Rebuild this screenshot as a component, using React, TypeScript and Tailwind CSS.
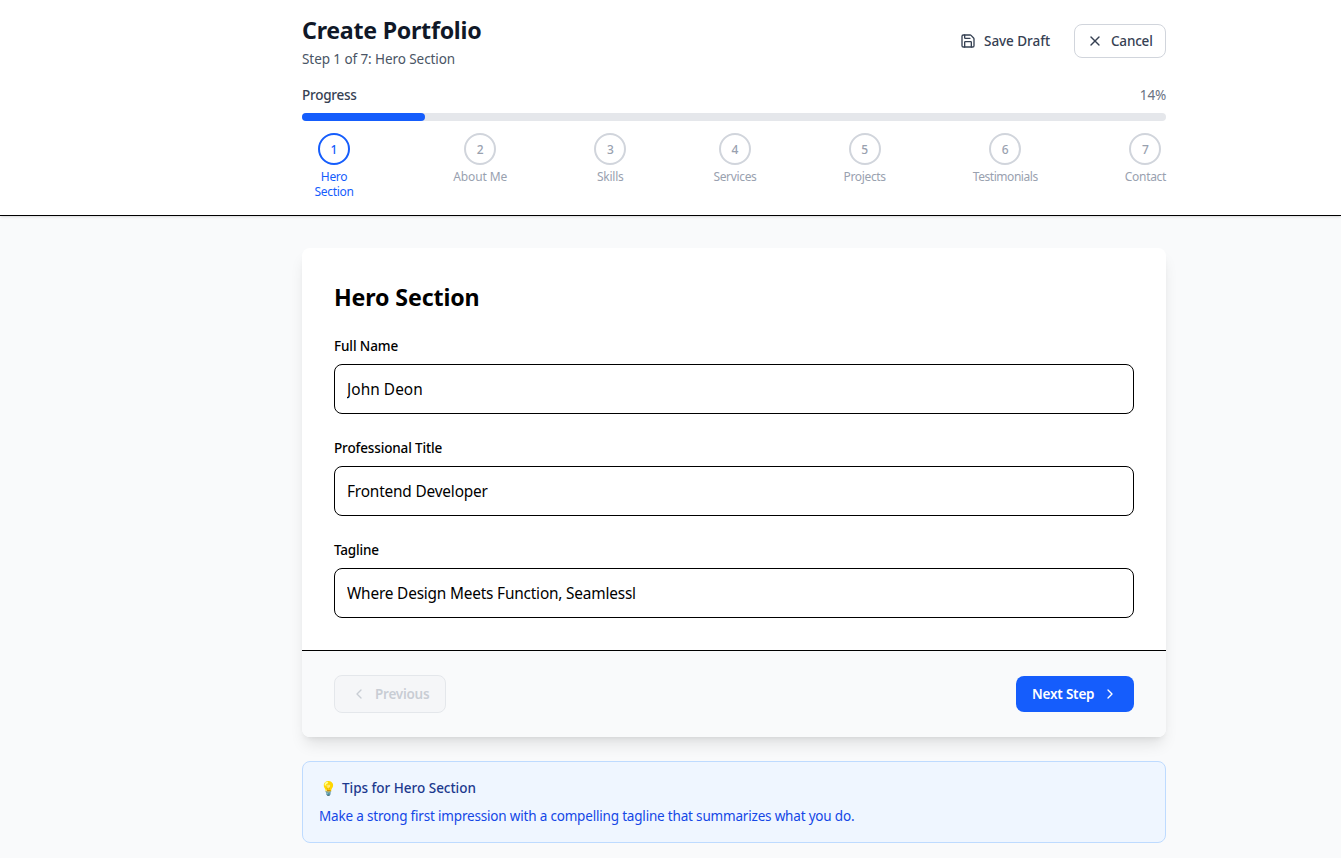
import { ChevronLeft, ChevronRight, Save, X } from "lucide-react";

const steps = [
  { label: "Hero Section", box: "w-16", tracking: "tracking-[-0.32px]" },
  { label: "About Me", box: "w-[54px]", tracking: "tracking-[-0.14px]" },
  { label: "Skills", box: "w-8", tracking: "tracking-[-0.25px]" },
  { label: "Services", box: "w-[43px]", tracking: "tracking-[-0.35px]" },
  { label: "Projects", box: "w-[42px]", tracking: "tracking-[-0.33px]" },
  { label: "Testimonials", box: "w-[65px]", tracking: "tracking-[-0.45px]" },
  { label: "Contact", box: "w-[41px]", tracking: "tracking-[-0.3px]" },
];

const fields = [
  {
    label: "Full Name",
    labelTracking: "tracking-[-0.11px]",
    value: "John Deon",
    valueTracking: "tracking-[0.06px]",
  },
  {
    label: "Professional Title",
    labelTracking: "tracking-[-0.14px]",
    value: "Frontend Developer",
    valueTracking: "tracking-[-0.18px]",
  },
  {
    label: "Tagline",
    labelTracking: "tracking-[-0.18px]",
    value: "Where Design Meets Function, Seamlessl",
    valueTracking: "tracking-[-0.19px]",
  },
];

function StepItem({ index }: { index: number }) {
  const step = steps[index];
  const active = index === 0;
  return (
    <li className={`flex flex-col items-center ${step.box} ${active ? "text-[#155dfc]" : "text-[#99a1af]"}`}>
      <span
        className={`flex size-8 items-center justify-center rounded-full border-2 pt-0.5 text-xs font-medium ${
          active ? "border-[#155dfc]" : "border-[#d1d5dc]"
        }`}
      >
        {index + 1}
      </span>
      <span
        className={`mt-1 text-center text-xs leading-[15px] ${step.tracking} ${
          active ? "w-12" : "whitespace-nowrap"
        }`}
      >
        {step.label}
      </span>
    </li>
  );
}

function Header() {
  return (
    <header className="h-[216px] border-b border-black bg-white pl-[127px] shadow-sm">
      <div className="mx-auto max-w-4xl px-4 pt-3.5">
        <div className="flex h-[54px] items-center justify-between">
          <div>
            <h1 className="text-[23.2px] leading-8 font-bold tracking-[-0.26px] text-[#101828]">
              Create Portfolio
            </h1>
            <p className="mt-[3px] -mb-px text-[13.5px] leading-5 tracking-[-0.08px] text-[#4a5565]">
              Step 1 of 7: Hero Section
            </p>
          </div>
          <div className="flex gap-3 text-[13.5px] font-medium text-[#364153]">
            <button className="flex h-[34px] w-[114px] items-center gap-2 whitespace-nowrap px-3">
              <Save className="size-4 shrink-0" />
              <span className="tracking-[-0.05px]">Save Draft</span>
            </button>
            <button className="flex h-[34px] w-[92px] items-center gap-2 whitespace-nowrap rounded-lg border border-[#d1d5dc] px-3">
              <X className="size-4 shrink-0" />
              <span className="tracking-[-0.2px]">Cancel</span>
            </button>
          </div>
        </div>
        <div className="mt-[17px] flex items-center justify-between text-[13.5px] leading-5">
          <span className="font-medium tracking-[-0.24px] text-[#364153]">Progress</span>
          <span className="tracking-[-0.17px] text-[#6a7282]">14%</span>
        </div>
        <div className="mt-2 h-2 rounded-full bg-[#e5e7eb]">
          <div className="h-2 w-[14.28%] rounded-full bg-[#155dfc]" />
        </div>
        <ol className="mt-3 flex justify-between">
          {steps.map((step, i) => (
            <StepItem key={step.label} index={i} />
          ))}
        </ol>
      </div>
    </header>
  );
}

export default function App() {
  return (
    <div className="min-h-[858px] bg-[#f9fafb] font-['Noto_Sans','Open_Sans',sans-serif]">
      <Header />
      <main className="pl-[127px]">
        <div className="mx-auto max-w-4xl px-4 pt-8">
          <section className="overflow-hidden rounded-lg bg-white shadow-lg">
            <div className="p-8">
              <h2 className="mb-6 pt-0.5 text-[23.2px] leading-[30px] font-bold tracking-[-0.14px] text-black">
                Hero Section
              </h2>
              <div className="flex flex-col gap-6">
                {fields.map((field) => (
                  <label key={field.label} className="block">
                    <span
                      className={`mb-2 block text-[13.5px] leading-5 font-medium text-black ${field.labelTracking}`}
                    >
                      {field.label}
                    </span>
                    <input
                      className={`block h-[50px] w-full rounded-lg border border-black px-3 text-[15.4px] leading-6 text-black ${field.valueTracking}`}
                      defaultValue={field.value}
                    />
                  </label>
                ))}
              </div>
            </div>
            <footer className="flex items-center justify-between border-t border-black bg-[#f9fafb] px-8 py-6">
              <button
                disabled
                className="flex h-[38px] w-28 items-center gap-2 rounded-lg border border-[#d1d5dc] bg-[#f3f4f6] px-4 text-[13.5px] font-semibold text-[#99a1af] opacity-50"
              >
                <ChevronLeft className="size-4 shrink-0" />
                <span className="tracking-[-0.24px]">Previous</span>
              </button>
              <button className="flex h-9 w-[118px] items-center justify-between whitespace-nowrap rounded-lg bg-[#155dfc] px-4 text-[13.5px] font-semibold text-white">
                <span className="tracking-[-0.2px]">Next Step</span>
                <ChevronRight className="size-4 shrink-0" />
              </button>
            </footer>
          </section>
          <aside className="mt-6 rounded-lg border border-[#bedbff] bg-[#eff6ff] p-4">
            <h3 className="mb-2 flex h-5 items-center text-[13.5px] font-medium text-[#1c398e]">
              <span className="w-[23px] pl-px text-[13.5px] leading-5">💡</span>
              <span className="tracking-[-0.02px]">Tips for Hero Section</span>
            </h3>
            <p className="text-[13.5px] leading-5 tracking-[-0.185px] text-[#1447e6]">
              Make a strong first impression with a compelling tagline that summarizes what you do.
            </p>
          </aside>
        </div>
      </main>
    </div>
  );
}
